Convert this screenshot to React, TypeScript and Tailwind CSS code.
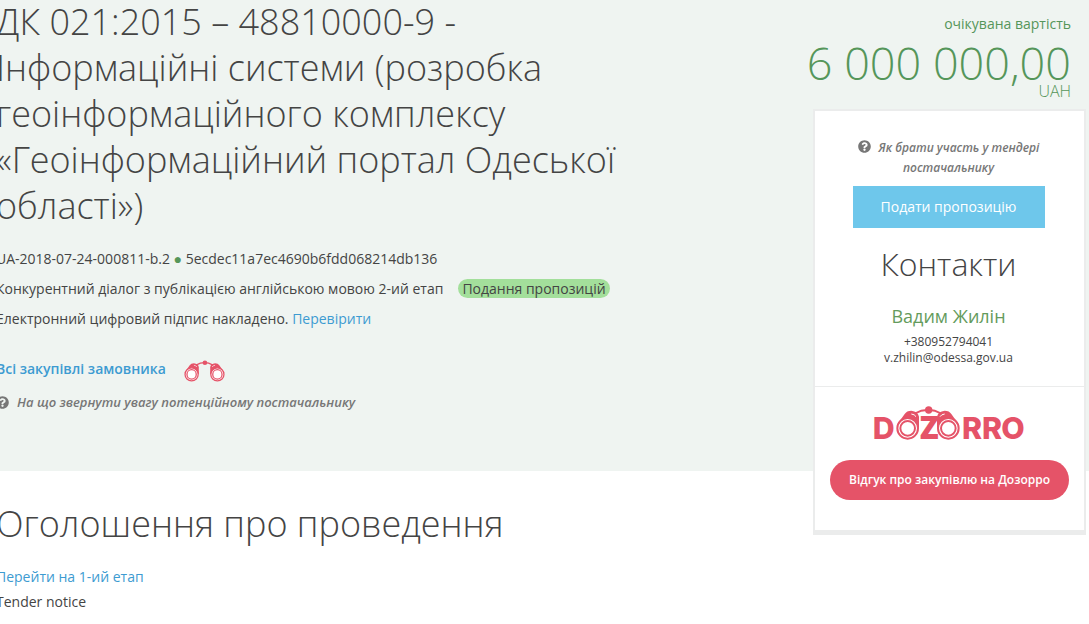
import { FaQuestionCircle } from 'react-icons/fa';

const CONTACT = {
  name: 'Вадим Жилін',
  phone: '+380952794041',
  email: 'v.zhilin@odessa.gov.ua',
};

function Binoculars() {
  return (
    <g fill="none" stroke="#e55368">
      <path d="M274 138 L298 104 Q304 94 318 94 Q338 96 341 112 L341 145 Z" fill="#e55368" stroke="none" />
      <path d="M462 138 L438 104 Q432 94 418 94 Q398 96 395 112 L395 145 Z" fill="#e55368" stroke="none" />
      <path d="M328 103 L348 94 L370 91 L388 94 L408 103" strokeWidth="6" />
      <circle cx="370" cy="92" r="11" fill="#e55368" stroke="none" />
      <path d="M318 104 Q328 105 332 112 M418 104 Q408 105 404 112" stroke="#fff" strokeWidth="3" />
      <circle cx="307" cy="147" r="31" fill="#fff" strokeWidth="6" />
      <circle cx="307" cy="147" r="22" strokeWidth="6" />
      <circle cx="429" cy="147" r="31" fill="#fff" strokeWidth="6" />
      <circle cx="429" cy="147" r="22" strokeWidth="6" />
    </g>
  );
}

function DozorroLogo() {
  return (
    <svg viewBox="203 80 459 105" className="h-[35px] w-[153px]" role="img" aria-label="Dozorro">
      <g fill="#e55368" fontFamily="Inter, sans-serif" fontWeight="800" fontSize="91">
        <text x="202" y="178">D</text>
        <text x="343" y="178" fontFamily="'Open Sans', sans-serif" fontSize="93">Z</text>
        <text x="470" y="178">R</text>
        <text x="530" y="178">R</text>
        <text x="588" y="178">O</text>
      </g>
      <Binoculars />
    </svg>
  );
}

function Sidebar() {
  return (
    <aside className="relative -mb-16 w-[273px] shrink-0">
      <div className="pr-[15px] pt-[15px] text-right text-[#55965a]">
        <p className="text-sm leading-5">очікувана вартість</p>
        <p className="-ml-4 mt-1.5 whitespace-nowrap text-[45px] font-light leading-[45px]">6 000 000,00</p>
        <p className="-mt-1 font-light leading-5">UAH</p>
      </div>

      <div className="mt-2 border-2 border-b-5 border-[#ebecec] bg-white text-center">
        <div className="pb-5 pl-6 pr-[26px] pt-[27px]">
          <a href="#guide" className="block px-4 text-xs font-semibold italic leading-5 text-[#777]">
            <FaQuestionCircle className="mr-2 inline size-[13px] align-[-1px]" />
            Як брати участь у тендері постачальнику
          </a>
          <button type="button" className="mt-2 h-[42px] w-48 bg-[#6ec7eb] text-sm text-white">
            Подати пропозицію
          </button>
          <h2 className="mt-4 text-[32px] font-light leading-10">Контакти</h2>
          <p className="mt-5 text-lg leading-6 text-[#649b5c]">{CONTACT.name}</p>
          <p className="mt-1.5 text-xs leading-4">{CONTACT.phone}</p>
          <p className="text-xs leading-4">{CONTACT.email}</p>
        </div>
        <div className="flex flex-col items-center border-t border-[#ebecec] px-[15px] pb-[30px] pt-[19px]">
          <DozorroLogo />
          <button type="button" className="mt-[19px] h-10 w-full rounded-full bg-[#e55368] text-xs font-semibold text-white">
            Відгук про закупівлю на Дозорро
          </button>
        </div>
      </div>
    </aside>
  );
}

export default function App() {
  return (
    <div className="overflow-hidden bg-white font-['Open_Sans',sans-serif] text-[#444]">
      <header className="-mt-px flex justify-between bg-[#eff4f1] pr-[3px]">
        <div className="-ml-1 max-w-[640px] pb-[59px]">
          <h1 className="text-4xl font-light leading-[46px]">
            ДК 021:2015 – 48810000-9 - Інформаційні системи (розробка геоінформаційного комплексу «Геоінформаційний
            портал Одеської області»)
          </h1>
          <div className="mt-[15px] text-sm leading-[30px]">
            <p>
              UA-2018-07-24-000811-b.2 <span className="text-[#55965a]">●</span> 5ecdec11a7ec4690b6fdd068214db136
            </p>
            <p>
              Конкурентний діалог з публікацією англійською мовою 2-ий етап
              <span className="ml-[15px] rounded-full bg-[#a3df9b] px-1">Подання пропозицій</span>
            </p>
            <p>
              Електронний цифровий підпис накладено.{' '}
              <a href="#sign" className="text-[#3d9bd1]">
                Перевірити
              </a>
            </p>
          </div>
          <div className="mt-5 flex items-center text-sm leading-[30px]">
            <a href="#customer" className="font-semibold text-[#3d9bd1]">
              Всі закупівлі замовника
            </a>
            <svg viewBox="271 79 194 104" className="ml-[18px] mt-1 h-[22px] w-[41px]" aria-hidden="true">
              <Binoculars />
            </svg>
          </div>
          <a href="#attention" className="mt-2 flex items-center text-[13px] font-[550] italic leading-5 text-[#777]">
            <FaQuestionCircle className="mr-2" />
            На що звернути увагу потенційному постачальнику
          </a>
        </div>
        <Sidebar />
      </header>

      <section className="-ml-1 pb-2 pt-[30px]">
        <h2 className="text-4xl font-light leading-[46px]">Оголошення про проведення</h2>
        <div className="mt-[17px] text-sm leading-[25px]">
          <a href="#stage" className="block text-[#3d9bd1]">
            Перейти на 1-ий етап
          </a>
          <p>Tender notice</p>
        </div>
      </section>
    </div>
  );
}
